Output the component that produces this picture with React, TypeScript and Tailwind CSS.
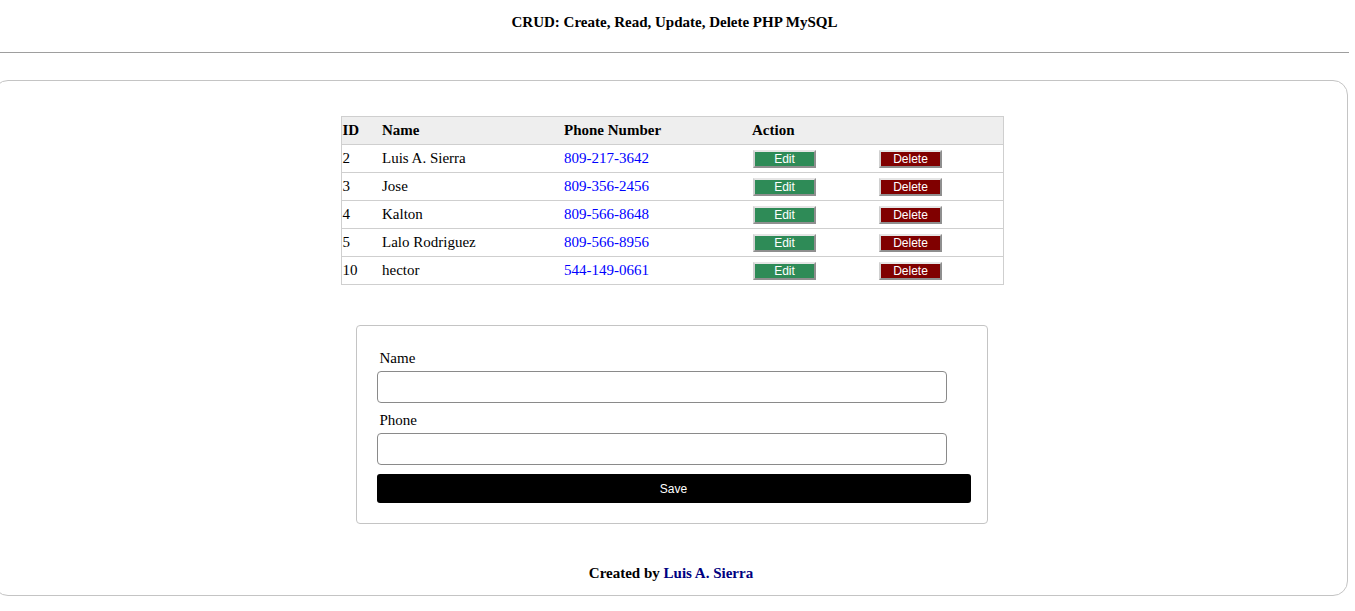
import React from 'react';

const contacts = [
  { id: 2, name: 'Luis A. Sierra', phone: '809-217-3642' },
  { id: 3, name: 'Jose', phone: '809-356-2456' },
  { id: 4, name: 'Kalton', phone: '809-566-8648' },
  { id: 5, name: 'Lalo Rodriguez', phone: '809-566-8956' },
  { id: 10, name: 'hector', phone: '544-149-0661' },
];

const serif = { fontFamily: '"Liberation Serif", "Times New Roman", serif' };

function RowButton({ label, color }: { label: string; color: string }) {
  return (
    <button
      className={`w-[63px] h-[18px] text-[12px] leading-none text-white font-['Liberation_Sans',Arial,sans-serif] border-2 border-t-[#e5e5e5] border-l-[#d0d0d0] border-r-[#8f8f8f] border-b-[#8f8f8f] ${color}`}
    >
      {label}
    </button>
  );
}

export default function App() {
  return (
    <div className="w-full min-h-[611px] bg-white text-black text-[15px] font-['Liberation_Serif','Times_New_Roman',serif] overflow-hidden">
      {/* Header */}
      <header className="h-[52px] pt-[14px] text-center">
        <h1 className="font-bold text-[15px] leading-[17px] -ml-[6px]">CRUD: Create, Read, Update, Delete PHP MySQL</h1>
      </header>
      <div className="h-px bg-[#9e9e9e] mr-[6px]" />

      {/* Main card */}
      <main className="mt-[27px] -ml-[7px] w-[1355px] h-[516px] border border-[#c4c4c4] rounded-[15px] pt-[35px] flex flex-col items-center">
        <table className="w-[663px] border-collapse border border-[#cfcfcf] ml-[3px]" style={serif}>
          <thead>
            <tr className="bg-[#eeeeee] h-[28px] border-b border-[#cfcfcf]">
              <th className="w-[41px] text-left pl-[1px] font-bold">ID</th>
              <th className="w-[182px] text-left font-bold">Name</th>
              <th className="w-[188px] text-left font-bold">Phone Number</th>
              <th className="w-[126px] text-left font-bold">Action</th>
              <th className="text-left" />
            </tr>
          </thead>
          <tbody>
            {contacts.map((c) => (
              <tr key={c.id} className="h-[28px] border-b border-[#cfcfcf]">
                <td className="pl-[1px]">{c.id}</td>
                <td>{c.name}</td>
                <td>
                  <a href="#" className="text-[#0000ff]">{c.phone}</a>
                </td>
                <td className="pl-[1px] align-middle">
                  <RowButton label="Edit" color="bg-[#2e8b57]" />
                </td>
                <td className="pl-[1px] align-middle">
                  <RowButton label="Delete" color="bg-[#800000]" />
                </td>
              </tr>
            ))}
          </tbody>
        </table>

        {/* Form */}
        <form className="mt-[40px] ml-[2px] w-[632px] border border-[#c4c4c4] rounded-[4px] pt-[23px] pb-[20px] pl-[20px] pr-[16px] flex flex-col">
          <label className="h-[19px] leading-[19px] pl-[3px]">Name</label>
          <input className="mt-[3px] w-[570px] h-[32px] border border-[#8a8a8a] rounded-[4px] px-2 outline-none" />
          <label className="mt-[8px] h-[19px] leading-[19px] pl-[3px]">Phone</label>
          <input className="mt-[3px] w-[570px] h-[32px] border border-[#8a8a8a] rounded-[4px] px-2 outline-none" />
          <button
            type="button"
            className="mt-[9px] w-[594px] h-[29px] bg-black text-white rounded-[3px] text-[12px] font-['Liberation_Sans',Arial,sans-serif]"
          >
            Save
          </button>
        </form>

        <p className="mt-[41px] font-bold leading-[17px] ml-[1px]">
          Created by <span className="text-[#000080]">Luis A. Sierra</span>
        </p>
      </main>
    </div>
  );
}
